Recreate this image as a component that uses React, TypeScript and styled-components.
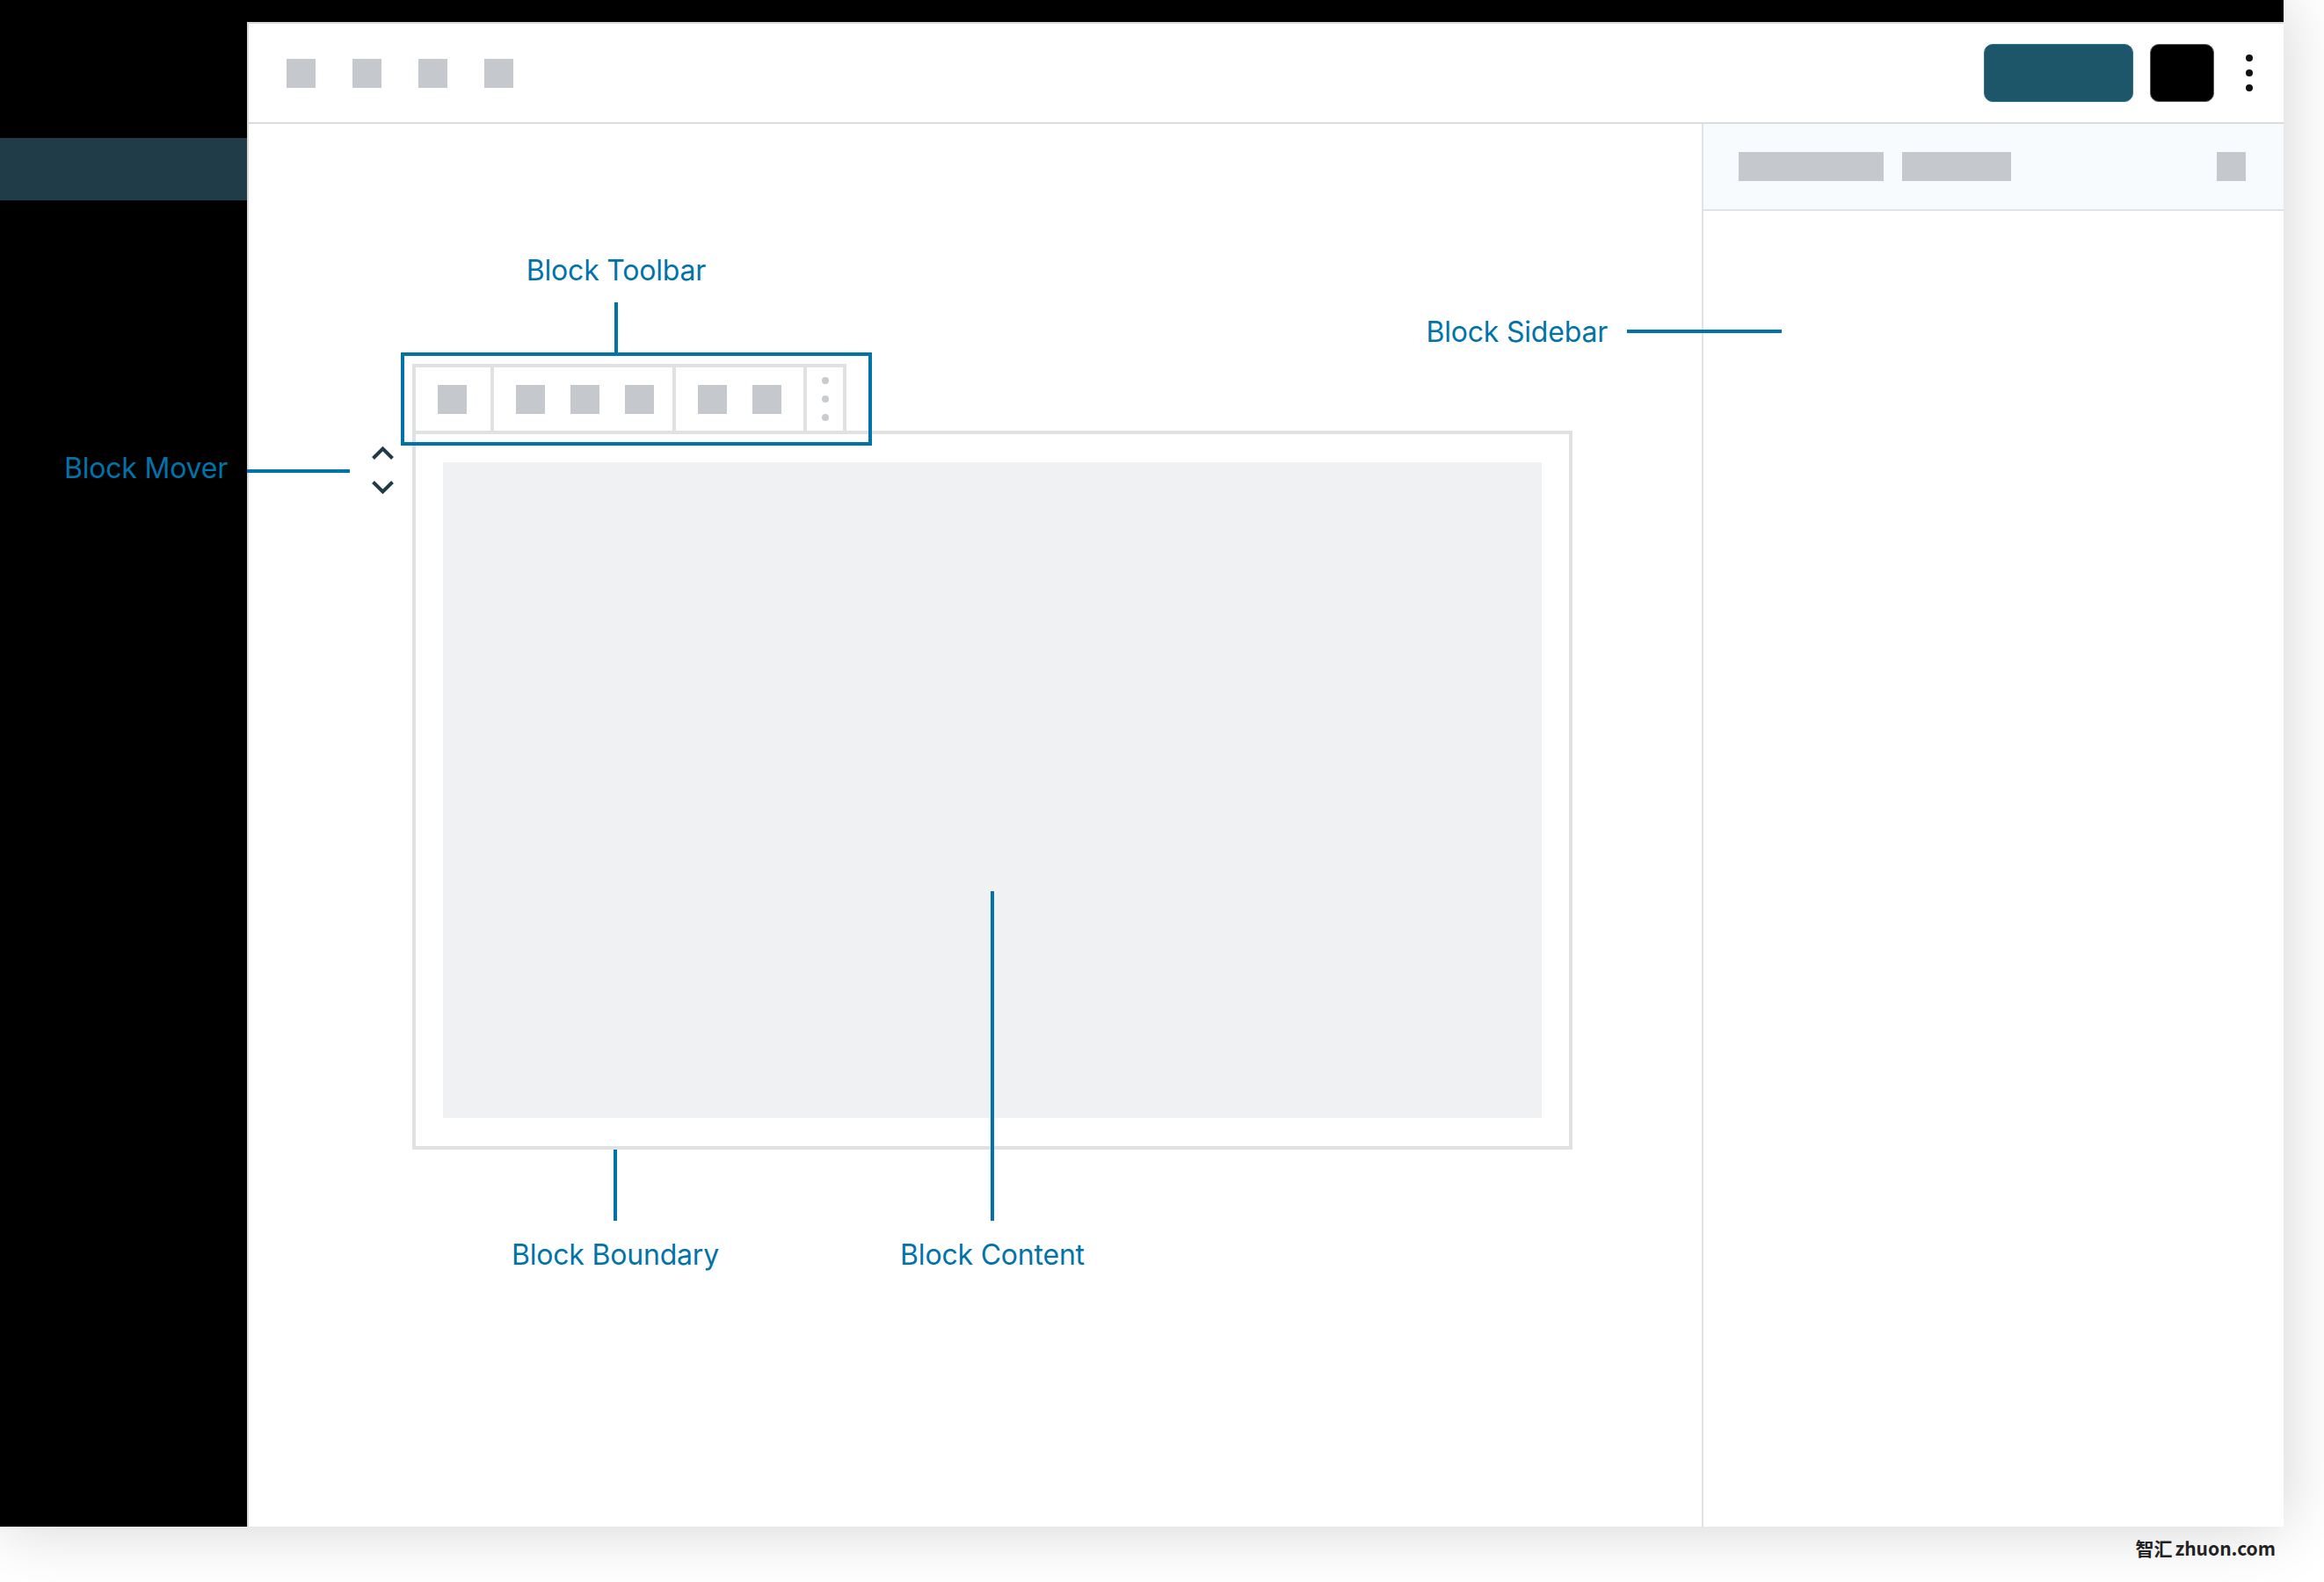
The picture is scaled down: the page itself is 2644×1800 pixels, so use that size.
import styled, { createGlobalStyle } from "styled-components"

const BLUE = "#0073aa"
const RULE = "#e0e1e3"

const GlobalStyle = createGlobalStyle`
  html, body {
    margin: 0;
    padding: 0;
    background: #fff;
  }
  body {
    font-family: Inter, "Noto Sans", sans-serif;
  }
`

//chevron for the block mover (up / down)
const Chevron = ({ down }: { down?: boolean }) => (
  <svg width="27" height="17" viewBox="0 0 27 17">
    <polyline
      points={down ? "2.5,2.5 13.5,13.5 24.5,2.5" : "2.5,14.5 13.5,3.5 24.5,14.5"}
      fill="none"
      stroke="#1f3b48"
      strokeWidth="4"
    />
  </svg>
)

const App = () => {
  return (
    <Page>
      <GlobalStyle />
      <Screen>
        <AdminMenu>
          <ActiveItem />
        </AdminMenu>

        <Editor>
          <Header>
            <Tools>
              <Placeholder />
              <Placeholder />
              <Placeholder />
              <Placeholder />
            </Tools>
            <Actions>
              <PublishButton />
              <SettingsButton />
              <Kebab>
                <Dot />
                <Dot />
                <Dot />
              </Kebab>
            </Actions>
          </Header>

          <Body>
            <Canvas>
              <TopCallout>
                <Label>Block Toolbar</Label>
                <VLine $h={57} />
              </TopCallout>

              <BlockRow>
                <Mover>
                  <MoverCallout>
                    <Label $lift>Block Mover</Label>
                    <HLine $w={117} />
                  </MoverCallout>
                  <Chevron />
                  <Chevron down />
                </Mover>

                <BlockColumn>
                  <Toolbar>
                    <Highlight />
                    <ToolGroup $w={85}>
                      <Placeholder />
                    </ToolGroup>
                    <ToolGroup $w={207}>
                      <Placeholder />
                      <Placeholder />
                      <Placeholder />
                    </ToolGroup>
                    <ToolGroup $w={149}>
                      <Placeholder />
                      <Placeholder />
                    </ToolGroup>
                    <MoreGroup>
                      <MoreDot />
                      <MoreDot />
                      <MoreDot />
                    </MoreGroup>
                  </Toolbar>

                  <Boundary>
                    <Content />
                  </Boundary>

                  <BottomCallouts>
                    <BottomCallout>
                      <VLine $h={81} />
                      <Label>Block Boundary</Label>
                    </BottomCallout>
                    <BottomCallout>
                      <VLine $h={81} $reach={294} />
                      <Label>Block Content</Label>
                    </BottomCallout>
                  </BottomCallouts>
                </BlockColumn>
              </BlockRow>
            </Canvas>

            <SidebarCallout>
              <Label>Block Sidebar</Label>
              <HLine $w={176} />
            </SidebarCallout>

            <Sidebar>
              <SidebarHeader>
                <Placeholder $w={165} />
                <Placeholder $w={124} />
                <Placeholder className="close" />
              </SidebarHeader>
            </Sidebar>
          </Body>
        </Editor>
      </Screen>
      <Watermark>智汇<span>zhuon.com</span></Watermark>
    </Page>
  )
}
export default App

const Page = styled.div`
  width: 2644px;
  height: 1800px;
  position: relative;
  overflow: hidden;
  background: #fff;
`

const Screen = styled.div`
  width: 2598px;
  height: 1737px;
  background: #000;
  display: grid;
  grid-template-columns: 281px 1fr;
  grid-template-rows: 25px 1fr;
  box-shadow: 0 0 70px rgba(0, 0, 0, 0.18);
`

const AdminMenu = styled.aside`
  grid-column: 1;
  grid-row: 2;
  padding-top: 132px;
`

const ActiveItem = styled.div`
  height: 71px;
  background: #203c49;
`

const Editor = styled.main`
  grid-column: 2;
  grid-row: 2;
  min-width: 0;
  display: flex;
  flex-direction: column;
  background: #fff;
  border-left: 2px solid #d8d8d8;
  border-top: 2px solid #d8d8d8;
`

const Header = styled.header`
  height: 112px;
  flex-shrink: 0;
  display: flex;
  align-items: center;
  padding: 0 35px 0 43px;
  border-bottom: 2px solid #dcdcdc;
`

const Tools = styled.div`
  display: flex;
  gap: 42px;
`

const Placeholder = styled.span<{ $w?: number }>`
  display: block;
  flex-shrink: 0;
  width: ${(p) => p.$w ?? 33}px;
  height: 33px;
  background: #c5c8cc;
`

const Actions = styled.div`
  margin-left: auto;
  display: flex;
  align-items: center;
`

const PublishButton = styled.div`
  width: 170px;
  height: 66px;
  box-sizing: border-box;
  border-radius: 10px;
  background: #1e5669;
  border: 1px solid #2b7190;
`

const SettingsButton = styled.div`
  width: 73px;
  height: 66px;
  margin-left: 19px;
  box-sizing: border-box;
  border-radius: 10px;
  background: #000;
  border: 1px solid #5a5a5a;
`

const Kebab = styled.div`
  margin-left: 36px;
  display: flex;
  flex-direction: column;
  gap: 9px;
`

const Dot = styled.span`
  width: 8px;
  height: 8px;
  border-radius: 50%;
  background: #111;
`

const Body = styled.div`
  flex: 1;
  min-height: 0;
  display: flex;
  position: relative;
`

const Canvas = styled.section`
  flex: 1;
  padding-top: 150px;
  display: flex;
  flex-direction: column;
  align-items: flex-start;
`

const Label = styled.span<{ $lift?: boolean }>`
  font-family: Inter, "Noto Sans", sans-serif;
  font-size: 32px;
  line-height: 33px;
  letter-spacing: -0.2px;
  color: ${BLUE};
  white-space: nowrap;
  margin-bottom: ${(p) => (p.$lift ? 8 : 0)}px;
`

const VLine = styled.span<{ $h: number; $reach?: number }>`
  display: block;
  width: 4px;
  height: ${(p) => p.$h + (p.$reach ?? 0)}px;
  margin-top: ${(p) => -(p.$reach ?? 0)}px;
  background: ${BLUE};
`

const HLine = styled.span<{ $w: number }>`
  display: block;
  width: ${(p) => p.$w}px;
  height: 4px;
  background: ${BLUE};
`

const TopCallout = styled.div`
  width: 300px;
  margin-left: 268px;
  margin-bottom: 13px;
  display: flex;
  flex-direction: column;
  align-items: center;
  ${VLine} {
    margin-top: 20px;
  }
`

const BlockRow = styled.div`
  display: flex;
  gap: 20px;
  margin-left: 139px;
`

const Mover = styled.div`
  position: relative;
  width: 27px;
  padding-top: 93px;
  display: flex;
  flex-direction: column;
  gap: 22px;
  svg {
    display: block;
  }
`

const MoverCallout = styled.div`
  position: absolute;
  right: calc(100% + 24px);
  top: 102px;
  height: 40px;
  display: flex;
  align-items: center;
  gap: 22px;
`

const BlockColumn = styled.div`
  display: flex;
  flex-direction: column;
  align-items: flex-start;
`

const Toolbar = styled.div`
  position: relative;
  width: 494px;
  height: 76px;
  box-sizing: border-box;
  display: flex;
  border: 4px solid ${RULE};
  border-bottom: none;
`

const Highlight = styled.div`
  position: absolute;
  top: -17px;
  left: -17px;
  width: 536px;
  height: 106px;
  box-sizing: border-box;
  border: 4px solid ${BLUE};
  z-index: 1;
  pointer-events: none;
`

const ToolGroup = styled.div<{ $w: number }>`
  width: ${(p) => p.$w}px;
  box-sizing: border-box;
  display: flex;
  align-items: center;
  gap: 29px;
  padding-left: 25px;
  & + & {
    border-left: 4px solid ${RULE};
  }
`

const MoreGroup = styled.div`
  flex: 1;
  display: flex;
  flex-direction: column;
  align-items: center;
  justify-content: center;
  gap: 13px;
  border-left: 4px solid ${RULE};
`

const MoreDot = styled.span`
  width: 8px;
  height: 8px;
  border-radius: 50%;
  background: #c8cbcf;
`

const Boundary = styled.div`
  width: 1320px;
  box-sizing: border-box;
  border: 4px solid ${RULE};
  padding: 32px 31px;
  background: #fff;
`

const Content = styled.div`
  height: 746px;
  background: #f0f1f3;
`

const BottomCallouts = styled.div`
  display: flex;
  gap: 129px;
  margin-left: 81px;
`

const BottomCallout = styled.div`
  width: 300px;
  display: flex;
  flex-direction: column;
  align-items: center;
  ${Label} {
    margin-top: 22px;
  }
`

const SidebarCallout = styled.div`
  position: absolute;
  top: 216px;
  right: 571px;
  height: 40px;
  display: flex;
  align-items: center;
  gap: 22px;
  z-index: 2;
`

const Sidebar = styled.aside`
  width: 662px;
  flex-shrink: 0;
  box-sizing: border-box;
  border-left: 2px solid #dfe3e6;
  background: #fff;
`

const SidebarHeader = styled.div`
  height: 97px;
  display: flex;
  align-items: center;
  gap: 21px;
  padding: 0 43px 0 40px;
  background: #f7fbfd;
  border-bottom: 2px solid #dde3e7;
  .close {
    margin-left: auto;
  }
`

const Watermark = styled.div`
  position: absolute;
  right: 55px;
  top: 1751px;
  font-family: "Noto Sans CJK SC", "Noto Sans", sans-serif;
  font-weight: 700;
  font-size: 21px;
  line-height: 21px;
  color: #222;
  span {
    margin-left: 3px;
  }
`
